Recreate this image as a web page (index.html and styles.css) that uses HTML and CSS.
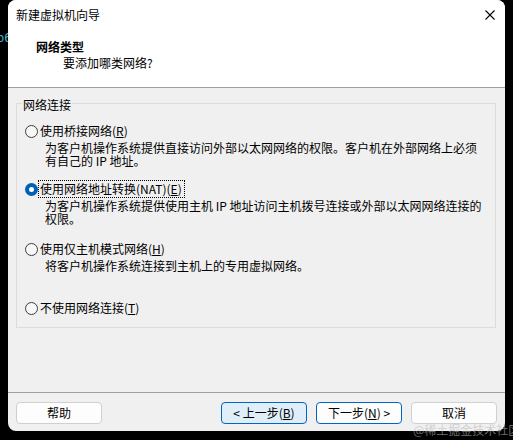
FILE: index.html
```html
<!DOCTYPE html>
<html lang="zh-CN">
<head>
<meta charset="utf-8">
<title>新建虚拟机向导</title>
<link rel="stylesheet" href="styles.css">
</head>
<body>
<span class="term">b6</span>
<div class="window">
  <div class="titlebar">
    <span class="title">新建虚拟机向导</span>
    <svg class="close" width="10" height="10" viewBox="0 0 10 10"><path d="M0.5 0.5 L9.5 9.5 M9.5 0.5 L0.5 9.5" stroke="#000" stroke-width="1.1" fill="none"/></svg>
  </div>
  <div class="header">
    <div class="h-title">网络类型</div>
    <div class="h-sub">要添加哪类网络?</div>
  </div>
  <div class="content">
    <div class="group">
      <span class="legend">网络连接</span>
      <div class="option">
        <div class="opt-row"><span class="radio"></span><span class="opt-label">使用桥接网络(<u>R</u>)</span></div>
        <div class="opt-desc">为客户机操作系统提供直接访问外部以太网网络的权限。客户机在外部网络上必须<br>有自己的 IP 地址。</div>
      </div>
      <div class="option opt-2">
        <div class="opt-row"><span class="radio checked"></span><span class="opt-label focus">使用网络地址转换(NAT)(<u>E</u>)</span></div>
        <div class="opt-desc">为客户机操作系统提供使用主机 IP 地址访问主机拨号连接或外部以太网网络连接的<br>权限。</div>
      </div>
      <div class="option opt-3">
        <div class="opt-row"><span class="radio"></span><span class="opt-label">使用仅主机模式网络(<u>H</u>)</span></div>
        <div class="opt-desc">将客户机操作系统连接到主机上的专用虚拟网络。</div>
      </div>
      <div class="option opt-4">
        <div class="opt-row"><span class="radio"></span><span class="opt-label">不使用网络连接(<u>T</u>)</span></div>
      </div>
    </div>
  </div>
  <div class="footer">
    <button class="btn">帮助</button>
    <div class="btn-group">
      <button class="btn btn-back">&lt; 上一步(<u>B</u>)</button>
      <button class="btn btn-next">下一步(<u>N</u>) &gt;</button>
      <button class="btn">取消</button>
    </div>
  </div>
</div>
<div class="watermark">@稀土掘金技术社区</div>
</body>
</html>
```

FILE: styles.css
```css
* { box-sizing: border-box; }
html, body {
  margin: 0;
  padding: 0;
  width: 513px;
  height: 440px;
  background: #000;
  overflow: hidden;
}
body {
  position: relative;
  font-family: "Noto Sans CJK SC", "Microsoft YaHei", sans-serif;
  font-size: 12px;
  color: #000;
}
.term {
  position: absolute;
  left: -3px;
  top: 31px;
  font-family: "DejaVu Sans Mono", monospace;
  font-size: 12px;
  color: #3fb8c8;
}
.window {
  position: relative;
  margin-left: 8px;
  width: 497px;
  height: 431px;
  background: #f0f0f0;
  border-radius: 8px;
  overflow: hidden;
  display: flex;
  flex-direction: column;
}
.titlebar {
  height: 30px;
  background: #fff;
  display: flex;
  align-items: center;
  justify-content: space-between;
  padding: 0 10px 0 8px;
}
.title { line-height: 16px; }
.close { display: block; }
.header {
  height: 58px;
  background: #fff;
  border-bottom: 1px solid #a0a0a0;
  padding-top: 9px;
}
.h-title {
  font-weight: bold;
  line-height: 16px;
  padding-left: 28px;
}
.h-sub {
  line-height: 16px;
  padding-left: 55px;
}
.content {
  flex: 1;
  padding: 15px 9px 0 8px;
}
.group {
  position: relative;
  border: 1px solid #dcdcdc;
  padding: 19px 8px 11px 8px;
}
.legend {
  position: absolute;
  left: 5px;
  top: -6px;
  line-height: 14px;
  padding: 0 1px;
  background: #f0f0f0;
}
.opt-row {
  height: 16px;
  display: flex;
  align-items: center;
}
.radio {
  width: 13px;
  height: 13px;
  border: 1px solid #3c3c3c;
  border-radius: 50%;
  background: #f7f7f7;
  flex: none;
  display: flex;
  align-items: center;
  justify-content: center;
}
.radio.checked {
  border: none;
  background: #005fb8;
}
.radio.checked::after {
  content: "";
  width: 5px;
  height: 5px;
  border-radius: 50%;
  background: #fff;
}
.opt-label {
  margin-left: 2px;
  line-height: 14px;
  padding: 0 1px 0 0;
  white-space: nowrap;
}
.opt-label.focus {
  outline: 1px dotted #000;
  outline-offset: 1px;
}
.opt-desc {
  margin-top: 2px;
  margin-left: 20px;
  line-height: 13px;
  white-space: nowrap;
}
.opt-2 { margin-top: 14px; }
.opt-3 { margin-top: 16px; }
.opt-4 { margin-top: 28px; }
u { text-decoration-thickness: 1px; text-underline-offset: 1px; }
.footer {
  height: 39px;
  border-top: 1px solid #a0a0a0;
  padding: 9px 8px 0 8px;
  display: flex;
  justify-content: space-between;
  align-items: flex-start;
}
.btn-group {
  display: flex;
  gap: 9px;
}
.btn {
  width: 86px;
  height: 22px;
  padding: 0;
  border: 1px solid #d0d0d0;
  border-radius: 4px;
  background: #fdfdfd;
  font-family: "Noto Sans CJK SC", "Microsoft YaHei", sans-serif;
  font-size: 12px;
  line-height: 18px;
  color: #000;
}
.btn-back {
  border-color: #0067c0;
  background: #e0eef9;
}
.btn-next {
  border-color: #0067c0;
  background: #fdfdfd;
}
.watermark {
  position: absolute;
  left: 413px;
  top: 422px;
  font-size: 12px;
  line-height: 16px;
  color: rgba(185, 185, 185, 0.6);
  white-space: nowrap;
}
```
